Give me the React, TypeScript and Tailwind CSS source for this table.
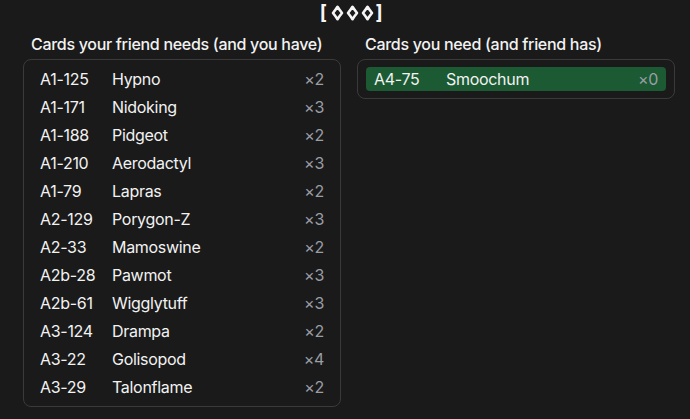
import React from "react";

type Card = { code: string; name: string; count: number };

const friendNeeds: Card[] = [
  { code: "A1-125", name: "Hypno", count: 2 },
  { code: "A1-171", name: "Nidoking", count: 3 },
  { code: "A1-188", name: "Pidgeot", count: 2 },
  { code: "A1-210", name: "Aerodactyl", count: 3 },
  { code: "A1-79", name: "Lapras", count: 2 },
  { code: "A2-129", name: "Porygon-Z", count: 3 },
  { code: "A2-33", name: "Mamoswine", count: 2 },
  { code: "A2b-28", name: "Pawmot", count: 3 },
  { code: "A2b-61", name: "Wigglytuff", count: 3 },
  { code: "A3-124", name: "Drampa", count: 2 },
  { code: "A3-22", name: "Golisopod", count: 4 },
  { code: "A3-29", name: "Talonflame", count: 2 },
];

const youNeed: Card[] = [{ code: "A4-75", name: "Smoochum", count: 0 }];

function Diamond() {
  return (
    <svg width="13" height="16" viewBox="0 0 13 16" className="block">
      <path
        d="M6.5 1.8 C7.8 3.9 9.4 6 11 8 C9.4 10 7.8 12.1 6.5 14.2 C5.2 12.1 3.6 10 2 8 C3.6 6 5.2 3.9 6.5 1.8 Z"
        fill="none"
        stroke="#f5f5f5"
        strokeWidth="2.6"
        strokeLinejoin="round"
      />
    </svg>
  );
}

function Row({ card, highlight }: { card: Card; highlight?: boolean }) {
  return (
    <div className={`flex items-center h-6 px-2 rounded ${highlight ? "bg-[#1b5a32]" : ""}`}>
      <span className="w-[72px] shrink-0 text-[#f2f2f2]">{card.code}</span>
      <span className="flex-1 text-[#f2f2f2]">{card.name}</span>
      <span className="text-[#9a9ea6]">×{card.count}</span>
    </div>
  );
}

function Column({ title, cards, highlight }: { title: string; cards: Card[]; highlight?: boolean }) {
  return (
    <div className="flex flex-col">
      <h2 className="ml-2 leading-6 mb-[3px] text-[16px] font-medium text-[#f2f2f2]">{title}</h2>
      <div className="border border-[#3a3a3a] rounded-lg px-2 py-[7px] flex flex-col gap-1">
        {cards.map((c) => (
          <Row key={c.code} card={c} highlight={highlight} />
        ))}
      </div>
    </div>
  );
}

export default function App() {
  return (
    <div
      className="w-[690px] h-[419px] bg-[#1a1a1a] text-[16px] tracking-[-0.3px] overflow-hidden"
      style={{ fontFamily: "Inter, 'Noto Sans', sans-serif" }}
    >
      <div className="pl-[23px] pr-[15px] pt-[2px]">
        <div className="flex items-center justify-center h-[22px] text-[19px] font-bold text-[#f5f5f5] pl-[4px]">
          <span className="leading-5">[</span>
          <div className="flex items-center gap-[2px] ml-[4px] mr-[2px]">
            <Diamond />
            <Diamond />
            <Diamond />
          </div>
          <span className="leading-5">]</span>
        </div>
        <div className="grid grid-cols-2 gap-4 mt-2 items-start">
          <Column title="Cards your friend needs (and you have)" cards={friendNeeds} />
          <Column title="Cards you need (and friend has)" cards={youNeed} highlight />
        </div>
      </div>
    </div>
  );
}
